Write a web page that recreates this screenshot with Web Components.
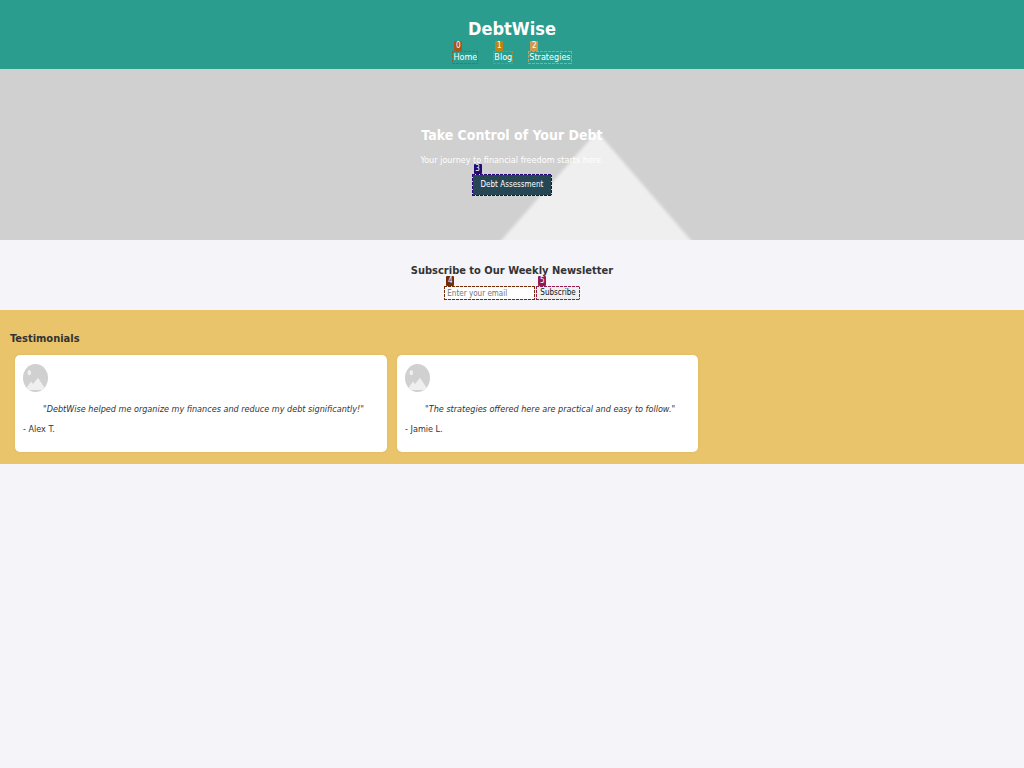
<!DOCTYPE html>
<html lang="en">
<head>
<meta charset="utf-8">
<title>DebtWise</title>
<style>
body { margin: 0; background: #f4f4f9; color: #333; font: 9px/14px "DejaVu Sans Condensed", "DejaVu Sans", sans-serif; }
</style>
</head>
<body>
<debt-app></debt-app>
<script>
const define = (name, html, init) => customElements.define(name, class extends HTMLElement {
  constructor() {
    super();
    this.attachShadow({ mode: 'open' }).innerHTML = html;
  }
  connectedCallback() { if (init) init(this, this.shadowRoot); }
});

define('marked-control', `
<style>
:host { display: inline-block; position: relative; vertical-align: middle; }
:host::after {
  content: ""; position: absolute; inset: 0; pointer-events: none;
  --row: repeating-linear-gradient(90deg, var(--mark) 0 3px, var(--gap, transparent) 3px 4px);
  --col: repeating-linear-gradient(var(--mark) 0 3px, var(--gap, transparent) 3px 4px);
  background: var(--row) top / 100% 1px, var(--row) bottom / 100% 1px, var(--col) left / 1px 100%, var(--col) right / 1px 100%;
  background-repeat: no-repeat;
}
.tag { position: absolute; z-index: 1; left: 2px; bottom: 100%; width: 8px; height: 10px; background: var(--mark); color: #fff; font-size: 8px; line-height: 10px; text-align: center; border-radius: 1px; }
</style>
<span class="tag"></span><slot></slot>`, (el, root) => {
  root.querySelector('.tag').textContent = el.getAttribute('label');
  el.style.setProperty('--mark', el.getAttribute('mark'));
});

define('site-header', `
<style>
:host { display: block; background: #2a9d8f; color: #fff; text-align: center; padding: 17px 10px 5px; }
h1 { margin: 0 0 11px; font-size: 18px; line-height: 23px; }
nav { display: flex; justify-content: center; gap: 15px; }
marked-control { padding: 0 1px; height: 13px; line-height: 13px; }
a { color: inherit; text-decoration: none; }
</style>
<h1>DebtWise</h1>
<nav>
<marked-control label="0" mark="#a6571c"><a href="#home">Home</a></marked-control>
<marked-control label="1" mark="#bd8413"><a href="#blog">Blog</a></marked-control>
<marked-control label="2" mark="#cf9a50"><a href="#strategies">Strategies</a></marked-control>
</nav>`);

define('hero-banner', `
<style>
:host { display: block; position: relative; overflow: hidden; background: #d0d0d0; color: #fff; text-align: center; padding: 57px 10px 44px; }
svg { position: absolute; inset: 0; width: 100%; height: 100%; }
.copy { position: relative; }
h2 { margin: 0 0 9px; font-size: 14px; line-height: 18px; }
p { margin: 0 0 7px; }
marked-control { --gap: #d8d8e0; }
button { display: block; font: 8px/12px "DejaVu Sans Condensed", "DejaVu Sans", sans-serif; color: #fff; background: #264653; border: 0; padding: 5px 9px; height: 22px; }
</style>
<svg viewBox="0 0 1024 171" preserveAspectRatio="xMidYMid slice" aria-hidden="true">
<defs><filter id="soft"><feGaussianBlur stdDeviation="1.5"/></filter></defs>
<path d="M491 183 594 66Q597 63 600 66L701 183Z" fill="#efefef" filter="url(#soft)"/>
</svg>
<div class="copy">
<h2>Take Control of Your Debt</h2>
<p>Your journey to financial freedom starts here.</p>
<marked-control label="3" mark="#250777"><button type="button">Debt Assessment</button></marked-control>
</div>`);

define('newsletter-signup', `
<style>
:host { display: block; text-align: center; padding: 23px 10px 10px; }
h3 { margin: 0 0 8px; font-size: 11px; line-height: 15px; }
form { display: flex; justify-content: center; gap: 1px; }
marked-control { --gap: #e8e0e0; }
input, button { display: block; box-sizing: border-box; height: 14px; margin: 0; font: 8px/10px "DejaVu Sans Condensed", "DejaVu Sans", sans-serif; border: 1px solid #767676; }
input { width: 91px; padding: 0 2px; background: #fff; }
input::placeholder { color: #757575; }
button { padding: 0 3px; background: #efefef; color: #111; }
</style>
<h3>Subscribe to Our Weekly Newsletter</h3>
<form>
<marked-control label="4" mark="#722c08"><input type="email" aria-label="Email" placeholder="Enter your email"></marked-control>
<marked-control label="5" mark="#941b4d"><button type="button">Subscribe</button></marked-control>
</form>`);

define('testimonial-card', `
<style>
:host { display: block; background: #fff; border-radius: 5px; padding: 9px 8px 16px; box-shadow: 0 0 3px #0001; }
svg { display: block; width: 25px; height: 28px; }
blockquote { margin: 10px 15px 6px 20px; font-style: italic; }
p { margin: 0; }
</style>
<svg viewBox="0 0 25 28" aria-hidden="true">
<defs><clipPath id="oval"><ellipse cx="12.5" cy="14" rx="12.5" ry="14"/></clipPath></defs>
<g clip-path="url(#oval)">
<path fill="#d0d0d0" d="M0 0h25v28H0z"/>
<ellipse cx="6.3" cy="8.7" rx="1.8" ry="2.6" fill="#efefef"/>
<path fill="#efefef" d="M2 26 8 17.5 10 20 15 13.8 23 26Z"/>
</g>
</svg>
<blockquote><slot></slot></blockquote>
<p><slot name="author"></slot></p>`);

define('testimonial-list', `
<style>
:host { display: block; background: #e9c46a; padding: 21px 10px 12px; }
h3 { margin: 0 0 9px; font-size: 11px; line-height: 15px; }
.cards { display: flex; flex-wrap: wrap; gap: 10px; padding: 0 5px; }
</style>
<h3>Testimonials</h3>
<div class="cards">
<testimonial-card>"DebtWise helped me organize my finances and reduce my debt significantly!"<span slot="author">- Alex T.</span></testimonial-card>
<testimonial-card>"The strategies offered here are practical and easy to follow."<span slot="author">- Jamie L.</span></testimonial-card>
</div>`);

define('debt-app', `
<style>:host { display: block; }</style>
<site-header></site-header>
<main>
<hero-banner></hero-banner>
<newsletter-signup></newsletter-signup>
<testimonial-list></testimonial-list>
</main>`);
</script>
</body>
</html>
